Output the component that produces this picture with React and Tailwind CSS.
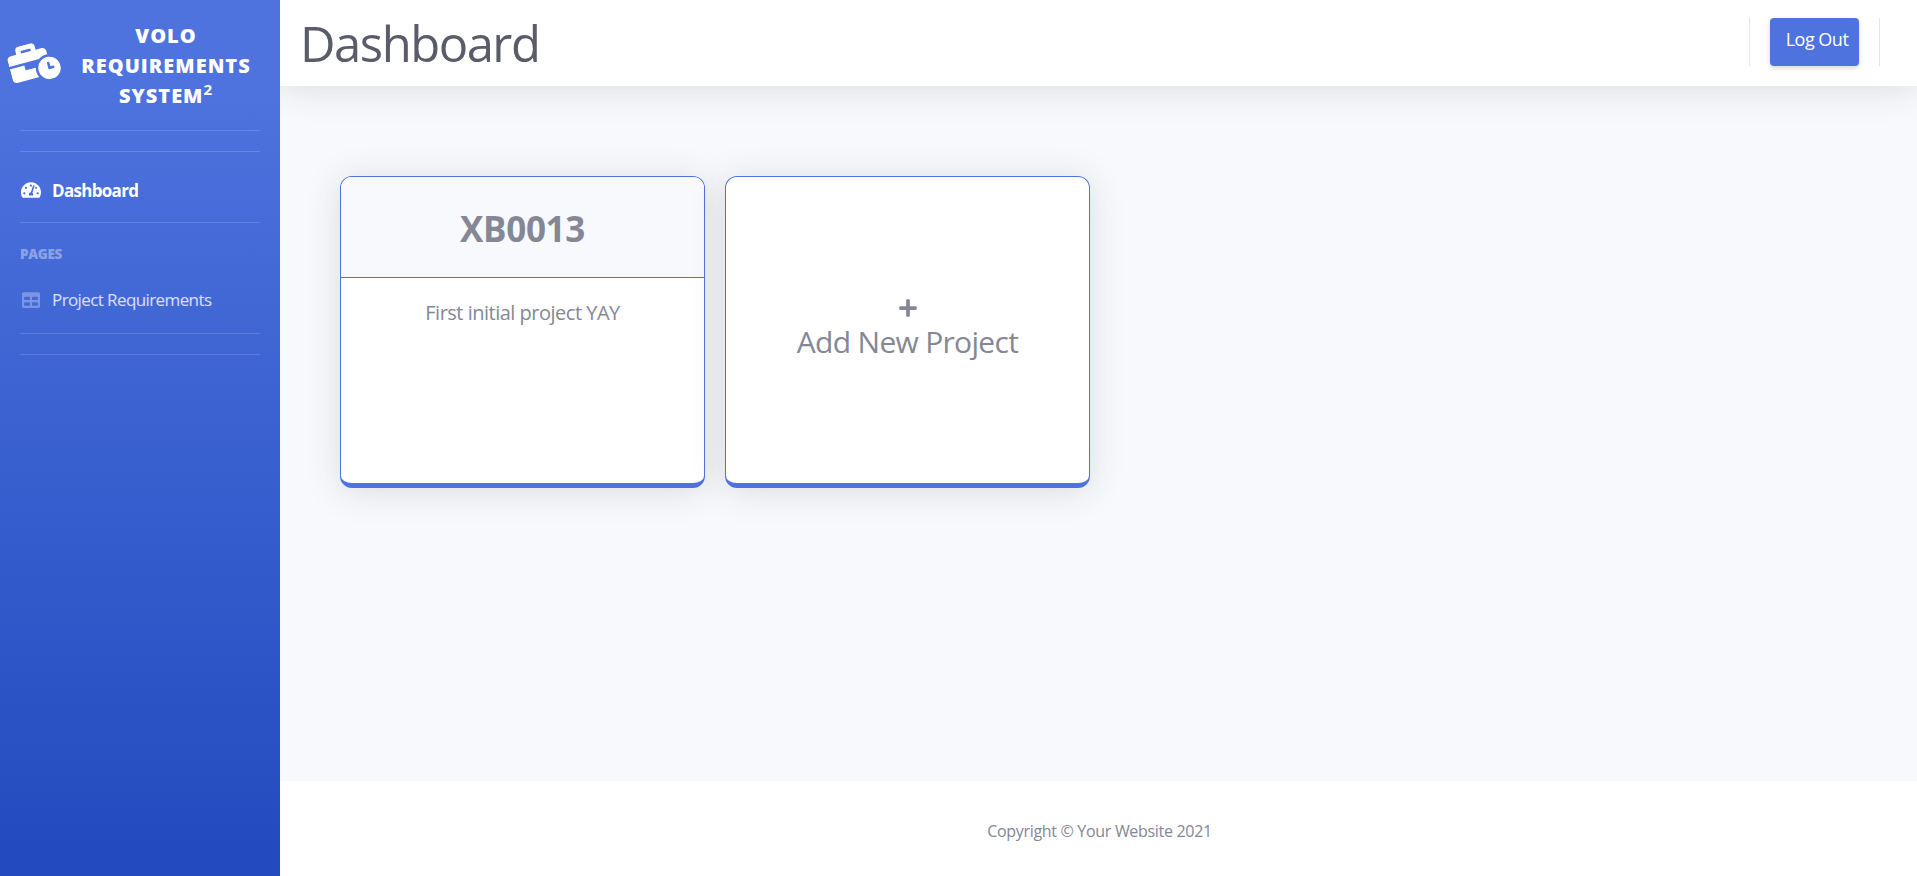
import { FaBusinessTime, FaPlus, FaTable, FaTachometerAlt } from "react-icons/fa";

function Divider({ className = "" }) {
  return <hr className={`mx-5 border-0 border-t border-white/15 ${className}`} />;
}

function Sidebar() {
  return (
    <aside className="flex w-[280px] shrink-0 flex-col bg-[linear-gradient(180deg,#4e73df_10%,#224abe_100%)] text-white">
      <a className="flex h-[130px] items-center pl-[9px]">
        <FaBusinessTime className="mb-[5px] h-[40px] w-[50px] -rotate-15" />
        <div className="ml-[21px] w-[172px] pt-px text-center text-[20px] leading-[30px] font-extrabold tracking-[1px] uppercase">
          <div className="whitespace-nowrap">Volo</div>
          <div className="whitespace-nowrap">Requirements</div>
          <div className="whitespace-nowrap">
            System<sup className="text-[15px] leading-none font-bold">2</sup>
          </div>
        </div>
      </a>
      <Divider />
      <Divider className="mt-5" />
      <a className="mt-[25px] flex h-[27px] items-center pl-[21px] text-[17px] font-bold">
        <FaTachometerAlt className="mr-[11px] mb-[2px] h-[18px] w-[20px]" />
        <span className="tracking-[-0.7px]">Dashboard</span>
      </a>
      <Divider className="mt-[18px]" />
      <div className="mt-[21px] h-5 pl-5 text-[13.5px] leading-5 font-extrabold tracking-[-0.3px] text-white/40">PAGES</div>
      <a className="mt-[22px] flex h-[27px] items-center pl-[22px] text-[17px] text-white/80">
        <FaTable className="mr-[12px] size-[18px] text-white/30" />
        <span className="tracking-[-0.6px]">Project Requirements</span>
      </a>
      <Divider className="mt-[20px]" />
      <Divider className="mt-5" />
    </aside>
  );
}

function Topbar() {
  return (
    <header className="relative flex h-[86px] items-start justify-between bg-white pt-[18px] pr-[37px] pl-5 shadow-[0_3px_35px_0_rgba(58,59,69,0.15)]">
      <h1 className="text-[49px] leading-[50px] tracking-[-1.5px] text-[#5a5c69]">Dashboard</h1>
      <div className="flex h-12 items-stretch">
        <div className="w-px bg-[#e3e6f0]" />
        <button className="mx-5 w-[89px] rounded-[4px] bg-[#4e73df] pb-[6px] pl-[5px] text-center text-[18px] text-white shadow-[0_2px_5px_0_rgba(58,59,69,0.2)]">
          <span className="tracking-[-0.5px] whitespace-nowrap">Log Out</span>
        </button>
        <div className="w-px bg-[#e3e6f0]" />
      </div>
    </header>
  );
}

const cardClass =
  "flex h-[312px] w-[365px] flex-col overflow-hidden rounded-xl border border-b-[5px] border-[#4e73df] bg-white text-center shadow-[0_3px_35px_0_rgba(58,59,69,0.15)]";

export default function App() {
  return (
    <div className="flex h-[876px] w-full overflow-hidden bg-white font-['Open_Sans','Noto_Sans',sans-serif] text-[#858796]">
      <Sidebar />
      <div className="flex min-w-0 flex-1 flex-col overflow-hidden bg-[#f8f9fc]">
        <Topbar />
        <main className="flex flex-1 gap-5 pt-[90px] pl-[60px]">
          <section className={cardClass}>
            <div className="flex h-[101px] items-center justify-center border-b border-[#4e73df] bg-[#f8f9fc] pt-[2px]">
              <h2 className="text-[35px] leading-none font-bold tracking-[-0.3px]">XB0013</h2>
            </div>
            <p className="mt-[20px] text-[20px] leading-[30px] tracking-[-0.5px]">First initial project YAY</p>
          </section>
          <section className={cardClass}>
            <FaPlus className="mx-auto mt-[121px] size-[20px]" />
            <div className="mt-[4px] text-[30px] leading-[40px] tracking-[-0.7px]">Add New Project</div>
          </section>
        </main>
        <footer className="flex h-[95px] items-center justify-center bg-white pt-[5px] pl-[2px] text-[16px]">
          <span className="tracking-[-0.31px]">Copyright © Your Website 2021</span>
        </footer>
      </div>
    </div>
  );
}
